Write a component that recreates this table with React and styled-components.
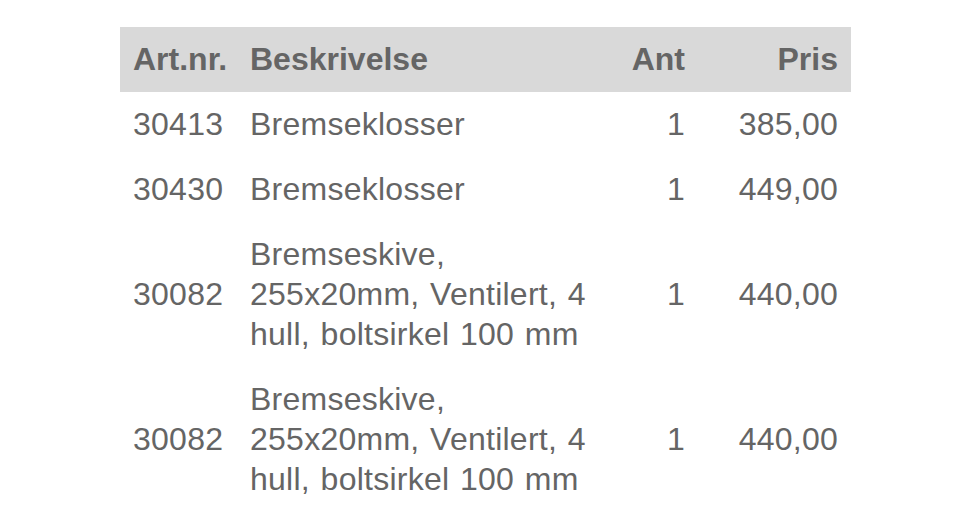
import React from 'react'
import styled, { createGlobalStyle } from 'styled-components'

const GlobalStyle = createGlobalStyle`
  html, body {
    margin: 0;
    padding: 0;
    background: #ffffff;
  }
  body {
    font-family: "Liberation Sans", Arial, Helvetica, sans-serif;
  }
`

const Page = styled.div`
  padding: 27px 0 0 120px;
`

const Table = styled.div`
  width: 731px;
  color: #656565;
  font-size: 32px;
  line-height: 40px;
`

const Row = styled.div`
  display: grid;
  grid-template-columns: 117px 350px 1fr 153px;
  align-items: center;
  padding: 11.5px 13px 13.5px;
  background: ${(p) => (p.head ? '#d9d9d9' : 'transparent')};
  font-weight: ${(p) => (p.head ? 700 : 400)};
  letter-spacing: ${(p) => (p.head ? '0' : '0.25px')};
  word-spacing: ${(p) => (p.head ? '0' : '1.5px')};
`

const Cell = styled.div`
  text-align: ${(p) => (p.right ? 'right' : 'left')};
`

const items = [
    { nr: '30413', desc: 'Bremseklosser', ant: 1, pris: '385,00' },
    { nr: '30430', desc: 'Bremseklosser', ant: 1, pris: '449,00' },
    { nr: '30082', desc: 'Bremseskive, 255x20mm, Ventilert, 4 hull, boltsirkel 100 mm', ant: 1, pris: '440,00' },
    { nr: '30082', desc: 'Bremseskive, 255x20mm, Ventilert, 4 hull, boltsirkel 100 mm', ant: 1, pris: '440,00' },
]

export default function App() {
    return (
        <Page>
            <GlobalStyle />
            <Table>
                <Row head>
                    <Cell>Art.nr.</Cell>
                    <Cell>Beskrivelse</Cell>
                    <Cell right>Ant</Cell>
                    <Cell right>Pris</Cell>
                </Row>
                {items.map((item, i) => (
                    <Row key={i}>
                        <Cell>{item.nr}</Cell>
                        <Cell>{item.desc}</Cell>
                        <Cell right>{item.ant}</Cell>
                        <Cell right>{item.pris}</Cell>
                    </Row>
                ))}
            </Table>
        </Page>
    )
}
